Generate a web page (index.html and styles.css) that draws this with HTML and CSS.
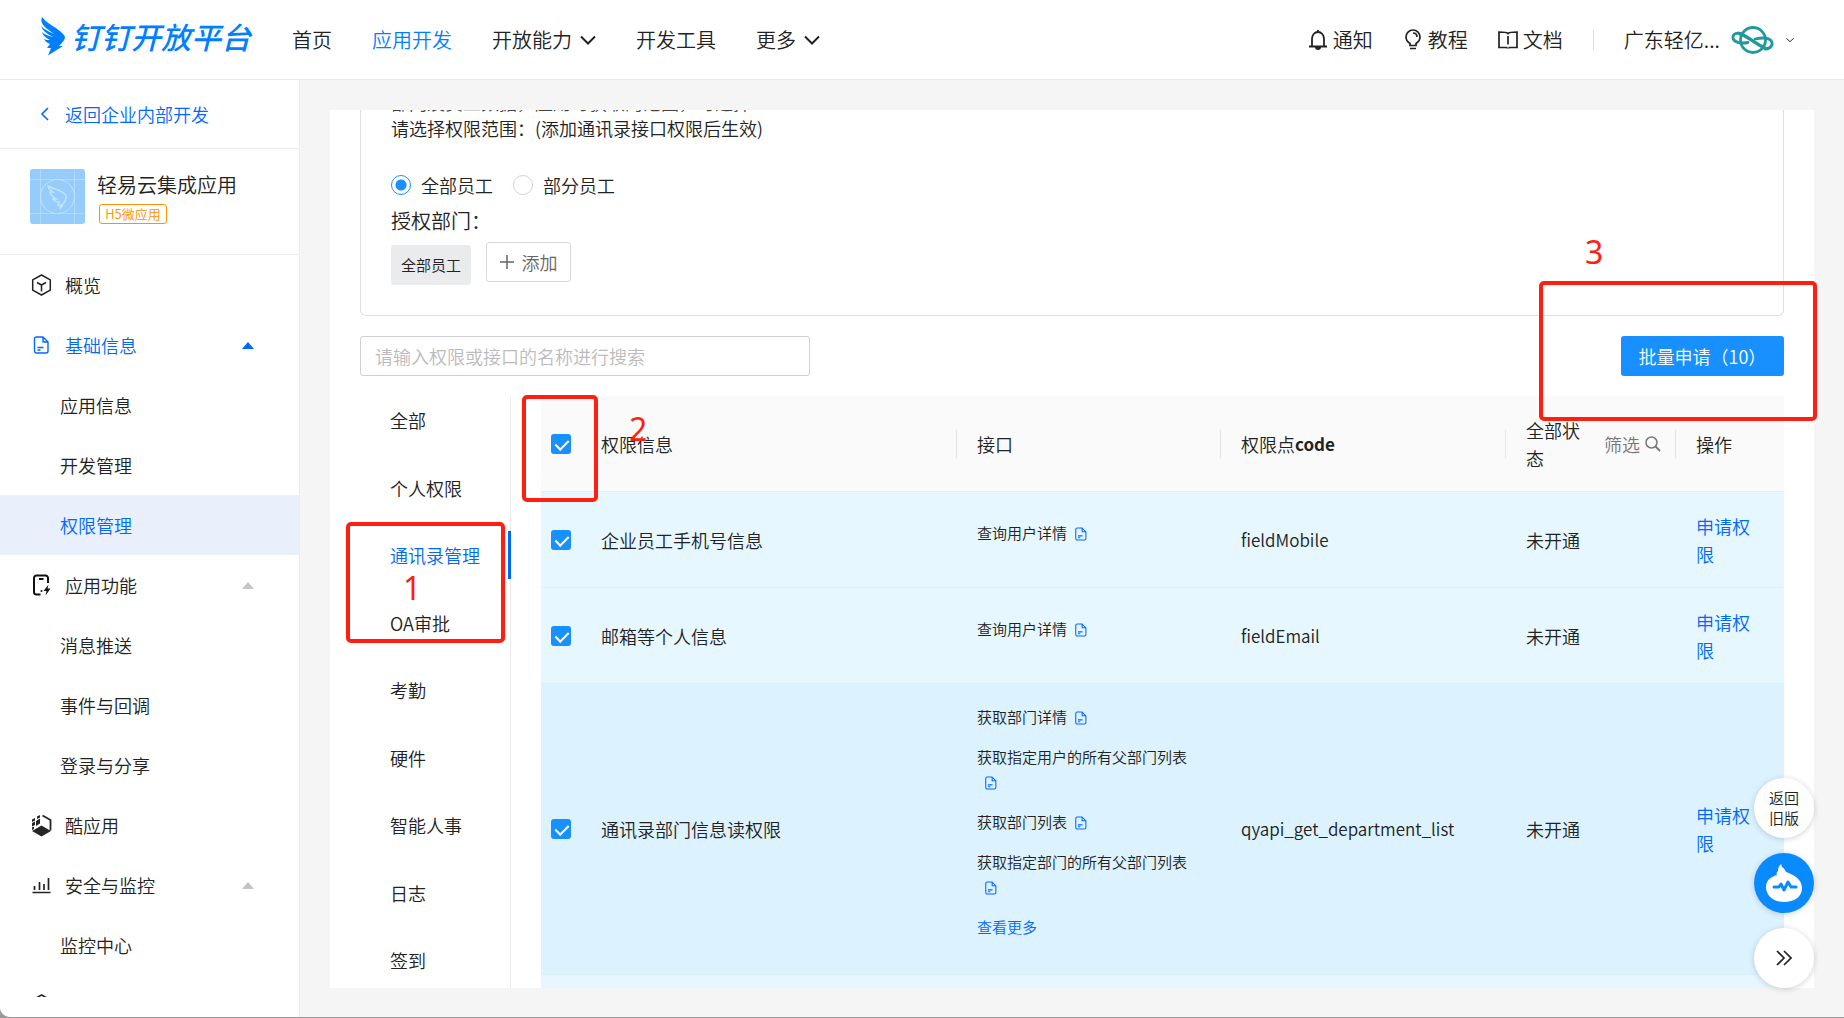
FILE: index.html
```html
<!DOCTYPE html>
<html lang="zh-CN">
<head>
<meta charset="utf-8">
<title>钉钉开放平台 - 权限管理</title>
<link rel="stylesheet" href="styles.css">
</head>
<body>
<svg class="defs" aria-hidden="true">
  <symbol id="doc" viewBox="0 0 16 18">
    <path d="M3 1h6.500l5 5v9a2 2 0 0 1-2 2H3a2 2 0 0 1-2-2V3a2 2 0 0 1 2-2z M9.500 1v5h5 M4 11.500h6 M4 14h3" fill="none" stroke="currentColor" stroke-width="1.400" stroke-linejoin="round"/>
  </symbol>
  <symbol id="cube" viewBox="0 0 20 22">
    <path d="M10 1l8.800 4.800v10.400L10 21l-8.800-4.800V5.800z M5.500 8.500L10 11l4.500-2.500 M10 11v6.500" fill="none" stroke="currentColor" stroke-width="1.500" stroke-linejoin="round"/>
  </symbol>
  <symbol id="chevron" viewBox="0 0 16 10">
    <path d="M1 1.500l7 7 7-7" fill="none" stroke="currentColor" stroke-width="2"/>
  </symbol>
</svg>
<div class="app">
  <header class="header">
    <a class="logo" href="#">
      <svg width="27" height="40" viewBox="0 0 27 40" aria-hidden="true"><path d="M3 1c4 5 9 8 14 11 5 4 8 6 9 9 0 3-3 6-6 9h4L9 39.500 12 32H8l3-4c-3-1-5-3-6-5 2 1 4 1 6 1-4-2-7-4-8-8 3 3 7 4 11 5C8 18 4 15 2 10c4 4 9 6 13 8C9 13 0 9 3 1z" fill="#0080ff"/></svg>
      <span>钉钉开放平台</span>
    </a>
    <nav class="nav">
      <a href="#">首页</a>
      <a href="#" class="active">应用开发</a>
      <a href="#">开放能力<svg width="16" height="10"><use href="#chevron"/></svg></a>
      <a href="#">开发工具</a>
      <a href="#">更多<svg width="16" height="10"><use href="#chevron"/></svg></a>
    </nav>
    <div class="tools">
      <a href="#"><svg width="20" height="20" viewBox="-1 0 20 20"><path d="M0 16.500h18 M3 16.500V9c0-4 2.500-7 6-7s6 3 6 7v7.500 M9 0v2" fill="none" stroke="currentColor" stroke-width="1.800"/><path d="M6 17a3 3 0 0 0 6 0z" fill="currentColor"/></svg>通知</a>
      <a href="#"><svg width="20" height="21" viewBox="-2 0 20 21"><path d="M5 16.500v-2C2.500 13 1 11 1 8a7 7 0 0 1 14 0c0 3-1.500 5-4 6.500v2z M5 19.500h6 M8 4c2.500 0 4 1.500 4 4" fill="none" stroke="currentColor" stroke-width="1.700"/></svg>教程</a>
      <a href="#"><svg width="20" height="18" viewBox="0 0 20 18"><path d="M10 2.500C9 1 7 1 1 1v15.500h6.500c1.500 0 2.500.500 2.500 0 0 .500 1 0 2.500 0H19V1c-6 0-8 0-9 1.500z M10 5v8.500" fill="none" stroke="currentColor" stroke-width="1.700"/></svg>文档</a>
      <span class="divider"></span>
      <button class="account" type="button">广东轻亿...
        <svg width="44" height="30" viewBox="0 0 44 30"><g fill="none" stroke="#22999a" stroke-width="2.800" stroke-linecap="round"><circle cx="22" cy="15" r="12.500"/><path d="M10 8.500C5 7 1.500 9.500 2 13c.500 4 7 6 15 4.500"/><path d="M24 14c7-1.500 13-1.500 16 1.500 3 4 0 8-6 8.500"/><path d="M8 8.500c7 1 18 12 27 15" stroke-width="3.400"/></g></svg>
        <svg width="8" height="6" viewBox="0 0 16 10"><use href="#chevron"/></svg>
      </button>
    </div>
  </header>
  <div class="body">
    <aside class="sidebar">
      <a class="back" href="#"><svg width="9" height="14" viewBox="0 0 9 14"><path d="M8 1L2 7l6 6" fill="none" stroke="currentColor" stroke-width="1.600"/></svg>返回企业内部开发</a>
      <div class="appinfo">
        <svg width="55" height="55" viewBox="0 0 55 55"><rect width="55" height="55" rx="3" fill="#95ccfb"/><g fill="none" stroke="#c4e3fd" stroke-width="1"><path d="M10.500 0v55M44.500 0v55M0 10.500h55M0 44.500h55" opacity=".6"/><circle cx="27.500" cy="27.500" r="17"/><path d="M18 17c6 3 12 4 17 8 2 2 1 5 0 7l-2 3-3 5 1-4h-3l1-3c-3 0-5-1-6-3h3c-3-2-6-4-6-7h3c-3-2-5-4-5-6z" stroke-width="1.500"/></g></svg>
        <div><div class="appname">轻易云集成应用</div><span class="tag">H5微应用</span></div>
      </div>
      <nav class="menu">
        <a class="top" href="#"><svg width="20" height="22"><use href="#cube"/></svg>概览</a>
        <a class="top open" href="#"><svg width="16" height="18"><use href="#doc"/></svg>基础信息<i class="arrow"></i></a>
        <a href="#">应用信息</a>
        <a href="#">开发管理</a>
        <a href="#" class="current">权限管理</a>
        <a class="top" href="#"><svg width="18" height="22" viewBox="0 0 18 22"><path d="M8 20.500H4A2.500 2.500 0 0 1 1.500 18V4A2.500 2.500 0 0 1 4 1.500h9A2.500 2.500 0 0 1 15.500 4v5 M6.500 5h4.500" fill="none" stroke="#111" stroke-width="2"/><circle cx="9" cy="17" r="1" fill="#111"/><path d="M16 10.500l-5 6.500h3l-1 4.500 5-7h-3z" fill="#111"/></svg>应用功能<i class="arrow"></i></a>
        <a href="#">消息推送</a>
        <a href="#">事件与回调</a>
        <a href="#">登录与分享</a>
        <a class="top" href="#"><svg width="21" height="23" viewBox="0 0 21 23"><path d="M10.500 11.500l9.500 5.500-9.500 5.500L1 17z M5 7l4-2.500v5L5 12z M1 9l3-1.500V11l-3 1.500z M1 5.500L4 4v2.500L1 8z M6 2.500L9 1v2.500L6 5z M1 13.500l2-1v2.500l-2 1z" fill="#262626"/><path d="M11.500 1.500l8 4.500v10.500" fill="none" stroke="#262626" stroke-width="1.800"/></svg>酷应用</a>
        <a class="top" href="#"><svg width="18" height="18" viewBox="0 0 18 18"><path d="M0 16.500h18 M2 10v4 M7 6v8 M11.500 8v6 M16 2v12" fill="none" stroke="#222" stroke-width="1.700"/></svg>安全与监控<i class="arrow"></i></a>
        <a href="#">监控中心</a>
        <a class="top" href="#"><svg width="20" height="22"><use href="#cube"/></svg>部署与发布</a>
      </nav>
    </aside>
    <main class="main">
      <section class="panel">
        <div class="scope">
          <p class="clip">部门及员工数据，应用可获取的范围，可选择</p>
          <p class="title">请选择权限范围：(添加通讯录接口权限后生效)</p>
          <div class="radios">
            <label><input type="radio" name="scope" checked>全部员工</label>
            <label><input type="radio" name="scope">部分员工</label>
          </div>
          <p class="dept">授权部门：</p>
          <div class="depts">
            <span class="chip">全部员工</span>
            <button class="add" type="button"><svg width="14" height="14" viewBox="0 0 14 14"><path d="M7 0v14M0 7h14" stroke="currentColor" stroke-width="1.500"/></svg>添加</button>
          </div>
        </div>
        <div class="searchbar">
          <input class="search" type="text" aria-label="搜索权限或接口" placeholder="请输入权限或接口的名称进行搜索">
          <button class="batch" type="button">批量申请（10）</button>
        </div>
        <div class="content">
          <nav class="tabs">
            <a href="#">全部</a>
            <a href="#">个人权限</a>
            <a href="#" class="selected">通讯录管理</a>
            <a href="#">OA审批</a>
            <a href="#">考勤</a>
            <a href="#">硬件</a>
            <a href="#">智能人事</a>
            <a href="#">日志</a>
            <a href="#">签到</a>
          </nav>
          <table class="table">
            <colgroup><col class="c1"><col class="c2"><col class="c3"><col class="c4"><col class="c5"><col class="c6"></colgroup>
            <thead>
              <tr>
                <th class="check"><input type="checkbox" checked aria-label="全选"></th>
                <th><span class="cell">权限信息</span></th>
                <th><span class="cell">接口</span></th>
                <th><span class="cell">权限点<b>code</b></span></th>
                <th><span class="cell filter"><span>全部状态</span><button type="button">筛选<svg width="16" height="16" viewBox="0 0 16 16"><path d="M10.500 10.500L15 15" stroke="currentColor" stroke-width="1.800"/><circle cx="6.500" cy="6.500" r="5.500" fill="none" stroke="currentColor" stroke-width="1.500"/></svg></button></span></th>
                <th><span class="cell">操作</span></th>
              </tr>
            </thead>
            <tbody>
              <tr>
                <td class="check"><input type="checkbox" checked aria-label="企业员工手机号信息"></td>
                <td>企业员工手机号信息</td>
                <td class="apis"><p>查询用户详情<a href="#" aria-label="文档"><svg width="12" height="14"><use href="#doc"/></svg></a></p></td>
                <td class="code">fieldMobile</td><td>未开通</td><td><a href="#">申请权限</a></td>
              </tr>
              <tr>
                <td class="check"><input type="checkbox" checked aria-label="邮箱等个人信息"></td>
                <td>邮箱等个人信息</td>
                <td class="apis"><p>查询用户详情<a href="#" aria-label="文档"><svg width="12" height="14"><use href="#doc"/></svg></a></p></td>
                <td class="code">fieldEmail</td><td>未开通</td><td><a href="#">申请权限</a></td>
              </tr>
              <tr class="hover">
                <td class="check"><input type="checkbox" checked aria-label="通讯录部门信息读权限"></td>
                <td>通讯录部门信息读权限</td>
                <td class="apis">
                  <p>获取部门详情<a href="#" aria-label="文档"><svg width="12" height="14"><use href="#doc"/></svg></a></p>
                  <p>获取指定用户的所有父部门列表<a href="#" aria-label="文档"><svg width="12" height="14"><use href="#doc"/></svg></a></p>
                  <p>获取部门列表<a href="#" aria-label="文档"><svg width="12" height="14"><use href="#doc"/></svg></a></p>
                  <p>获取指定部门的所有父部门列表<a href="#" aria-label="文档"><svg width="12" height="14"><use href="#doc"/></svg></a></p>
                  <p><a class="more" href="#">查看更多</a></p>
                </td>
                <td class="code">qyapi_get_department_list</td><td>未开通</td><td><a href="#">申请权限</a></td>
              </tr>
              <tr>
                <td class="check"></td><td></td><td></td><td></td><td></td><td></td>
              </tr>
            </tbody>
          </table>
        </div>
      </section>
    </main>
  </div>
  <div class="floats">
    <button type="button">返回<br>旧版</button>
    <button type="button" class="bot" aria-label="智能客服"><svg width="60" height="60" viewBox="0 0 60 60"><path d="M23 22c-1-2 0-3 1-4 0-3 1-5 3-7l1 3c2 1 3 3 4 5 9 3 16 8 16 16 0 9-8 14-18 14s-18-6-18-15c0-6 4-10 11-12z" fill="#fff"/><path d="M20 34h5l2-3 3 6 4-8 3 5h5" fill="none" stroke="#0a8aff" stroke-width="3" stroke-linecap="round" stroke-linejoin="round"/></svg></button>
    <button type="button" aria-label="收起"><svg width="16" height="16" viewBox="0 0 16 16"><path d="M1 1l7 7-7 7M8 1l7 7-7 7" fill="none" stroke="#222" stroke-width="1.700"/></svg></button>
  </div>
  <div class="mark mark1"><span>1</span></div>
  <div class="mark mark2"><span>2</span></div>
  <div class="mark mark3"><span>3</span></div>
</div>
</body>
</html>
```
FILE: styles.css
```css
* { box-sizing: border-box; }
body {
  display: flow-root;
  min-height: 100vh;
  margin: 0;
  padding-bottom: 1px;
  background: #999;
  color: #222;
  font: 350 18px/28px "Noto Sans CJK SC", sans-serif;
}
p { margin: 0; }
a { color: inherit; text-decoration: none; }
button, input { font: inherit; color: inherit; }
button { border: 0; background: none; padding: 0; cursor: pointer; }
svg { flex: none; }
.defs { position: absolute; width: 0; height: 0; }

.app {
  display: flex;
  flex-direction: column;
  height: calc(100vh - 1px);
  background: #f5f5f5;
  border-bottom-left-radius: 10px;
  overflow: hidden;
}

.header {
  display: flex;
  align-items: center;
  flex: none;
  height: 80px;
  padding: 0 50px 0 39px;
  background: #fff;
  border-bottom: 1px solid #e8e8e8;
  font-size: 20px;
}
.logo {
  display: flex;
  align-items: center;
  gap: 5px;
  margin: 0 41px 8px 0;
  color: #0080ff;
  font-size: 30px;
  font-weight: 500;
  font-style: italic;
}
.nav { display: flex; gap: 40px; }
.nav a { display: flex; align-items: center; gap: 8px; }
.nav .active { color: #0080ff; }
.tools { display: flex; align-items: center; gap: 30px; margin-left: auto; }
.tools a { display: flex; align-items: center; gap: 5px; }
.divider { width: 1px; height: 20px; background: #ddd; }
.account { display: flex; align-items: center; gap: 11px; }

.body { display: flex; flex: 1; min-height: 0; }

.sidebar {
  display: flex;
  flex-direction: column;
  flex: none;
  width: 300px;
  padding-bottom: 20px;
  background: #fff;
  border-right: 1px solid #ececec;
}
.back {
  display: flex;
  align-items: center;
  flex: none;
  gap: 16px;
  height: 69px;
  padding-left: 40px;
  color: #0068ff;
  border-bottom: 1px solid #ececec;
}
.appinfo {
  display: flex;
  flex: none;
  gap: 12px;
  height: 106px;
  padding: 20px 0 0 30px;
  border-bottom: 1px solid #ececec;
}
.appname { font-size: 20px; line-height: 32px; }
.tag {
  display: block;
  width: 68px;
  margin: 3px 0 0 2px;
  border: 1px solid #ff9200;
  border-radius: 3px;
  color: #ff9200;
  font-size: 13px;
  line-height: 18px;
  text-align: center;
}
.menu { flex: 1; min-height: 0; overflow: hidden; }
.menu a { display: flex; align-items: center; height: 60px; padding-left: 60px; }
.menu .top { padding: 0 45px 0 31px; }
.menu .top svg { width: 21px; margin-right: 13px; }
.menu .open { color: #0068ff; }
.menu .current { color: #0068ff; background: #e9f0fb; }
.arrow {
  margin-left: auto;
  border: 6px solid transparent;
  border-top: 0;
  border-bottom: 7px solid #c4c4c4;
}
.open .arrow { border-bottom-color: #0068ff; }

.main { flex: 1; min-width: 0; padding: 30px 30px 29px; }
.panel {
  display: flex;
  flex-direction: column;
  height: 100%;
  padding: 0 30px;
  background: #fff;
  overflow: hidden;
}

.scope {
  flex: none;
  height: 206px;
  padding: 0 30px;
  border: 1px solid #e0e0e0;
  border-top: 0;
  border-radius: 0 0 6px 6px;
}
.clip {
  display: flex;
  align-items: flex-end;
  height: 4px;
  overflow: hidden;
  color: #444;
  line-height: 24px;
}
.radios { display: flex; gap: 20px; margin-top: 29px; }
.radios label { display: flex; align-items: center; gap: 10px; }
.radios input {
  appearance: none;
  width: 20px;
  height: 20px;
  margin: 0;
  border: 1px solid #d4d4d4;
  border-radius: 50%;
}
.radios input:checked {
  border-color: #1890ff;
  background: radial-gradient(circle, #1890ff 5px, #fff 6px);
}
.dept { margin-top: 8px; font-size: 20px; }
.depts { display: flex; align-items: flex-end; gap: 15px; margin-top: 7px; }
.chip {
  width: 80px;
  margin-top: 3px;
  background: #e9ebed;
  border-radius: 3px;
  font-size: 15px;
  line-height: 40px;
  text-align: center;
}
.add {
  display: flex;
  align-items: center;
  justify-content: center;
  gap: 8px;
  width: 85px;
  height: 40px;
  margin-bottom: 3px;
  border: 1px solid #d9d9d9;
  border-radius: 3px;
  color: #666;
}

.searchbar { display: flex; flex: none; justify-content: space-between; margin: 20px 0; }
.search {
  width: 450px;
  height: 40px;
  padding: 0 14px;
  border: 1px solid #d0d0d0;
  border-radius: 3px;
}
.search::placeholder { color: #bbb; }
.batch {
  width: 163px;
  height: 40px;
  border-radius: 3px;
  background: #1890ff;
  color: #fff;
}

.content { display: flex; align-items: flex-start; flex: 1; min-height: 0; }
.tabs {
  display: flex;
  flex-direction: column;
  justify-content: space-between;
  flex: none;
  width: 151px;
  height: 100%;
  margin-right: 30px;
  padding-bottom: 4px;
  border-right: 1px solid #ececec;
}
.tabs a {
  margin-right: -1px;
  padding-left: 30px;
  line-height: 48px;
}
.tabs .selected { color: #0068ff; border-right: 3px solid #0068ff; }

.table {
  flex: 1;
  width: 100%;
  min-width: 0;
  table-layout: fixed;
  border-collapse: separate;
  border-spacing: 0;
  text-align: left;
}
.c1 { width: 44px; }
.c2 { width: 372px; }
.c3 { width: 264px; }
.c4 { width: 285px; }
.c5 { width: 170px; }
.table th, .table td { padding: 19px 32px 19px 20px; font-weight: 350; }
.table .check { padding: 0 0 0 10px; }
.table .check input { display: block; }
.table th { height: 96px; background: #fafafa; border-bottom: 1px solid #ececec; }
.table tr > :nth-child(2) { padding-left: 16px; }
.table td { height: 96px; background: #e6f7ff; border-bottom: 1px solid #dceef6; }
.table .hover td { height: 291px; background: #dcf3ff; }
.table a { color: #0068ff; }
.cell { display: flex; align-items: center; height: 28px; }
.table b { font-size: 17px; font-weight: 700; }
.code { font-size: 17px; }
.table th:nth-child(n+3) .cell { margin-left: -21px; padding-left: 20px; border-left: 1px solid #e6e6e6; }
.filter { justify-content: space-between; margin-right: -17px; }
.filter span { width: 56px; }
.filter button { display: flex; align-items: center; gap: 5px; color: #777; }
.table .apis { padding-right: 18px; font-size: 15px; line-height: 25px; }
.apis p { margin-bottom: 15px; }
.apis svg { margin: 0 8px; vertical-align: -2px; }
.check input {
  appearance: none;
  width: 20px;
  height: 20px;
  margin: 0;
  border-radius: 3px;
  background: #1890ff;
}
.check input:checked::after {
  content: "";
  display: block;
  width: 6px;
  height: 11px;
  margin: 3px 0 0 7px;
  border: solid #fff;
  border-width: 0 2px 2px 0;
  transform: rotate(45deg);
}

.floats {
  position: absolute;
  right: 30px;
  bottom: 30px;
  display: grid;
  gap: 15px;
}
.floats button {
  display: grid;
  place-items: center;
  place-content: center;
  width: 60px;
  height: 60px;
  border-radius: 50%;
  background: #fff;
  box-shadow: 0 1px 6px rgba(0, 0, 0, .18);
  font-size: 15px;
  line-height: 20px;
}
.floats .bot { background: #0a8aff; }

.mark {
  position: absolute;
  border: 4px solid #ff1f10;
  border-radius: 5px;
  color: #ff1f10;
  font: 32px/32px "Noto Sans", sans-serif;
}
.mark span { position: absolute; }
.mark1 { left: 346px; top: 522px; width: 159px; height: 121px; }
.mark1 span { left: 53px; top: 46px; }
.mark2 { left: 522px; top: 395px; width: 76px; height: 107px; }
.mark2 span { left: 103px; top: 14px; }
.mark3 { left: 1539px; top: 281px; width: 278px; height: 140px; }
.mark3 span { left: 42px; top: -49px; }
```
